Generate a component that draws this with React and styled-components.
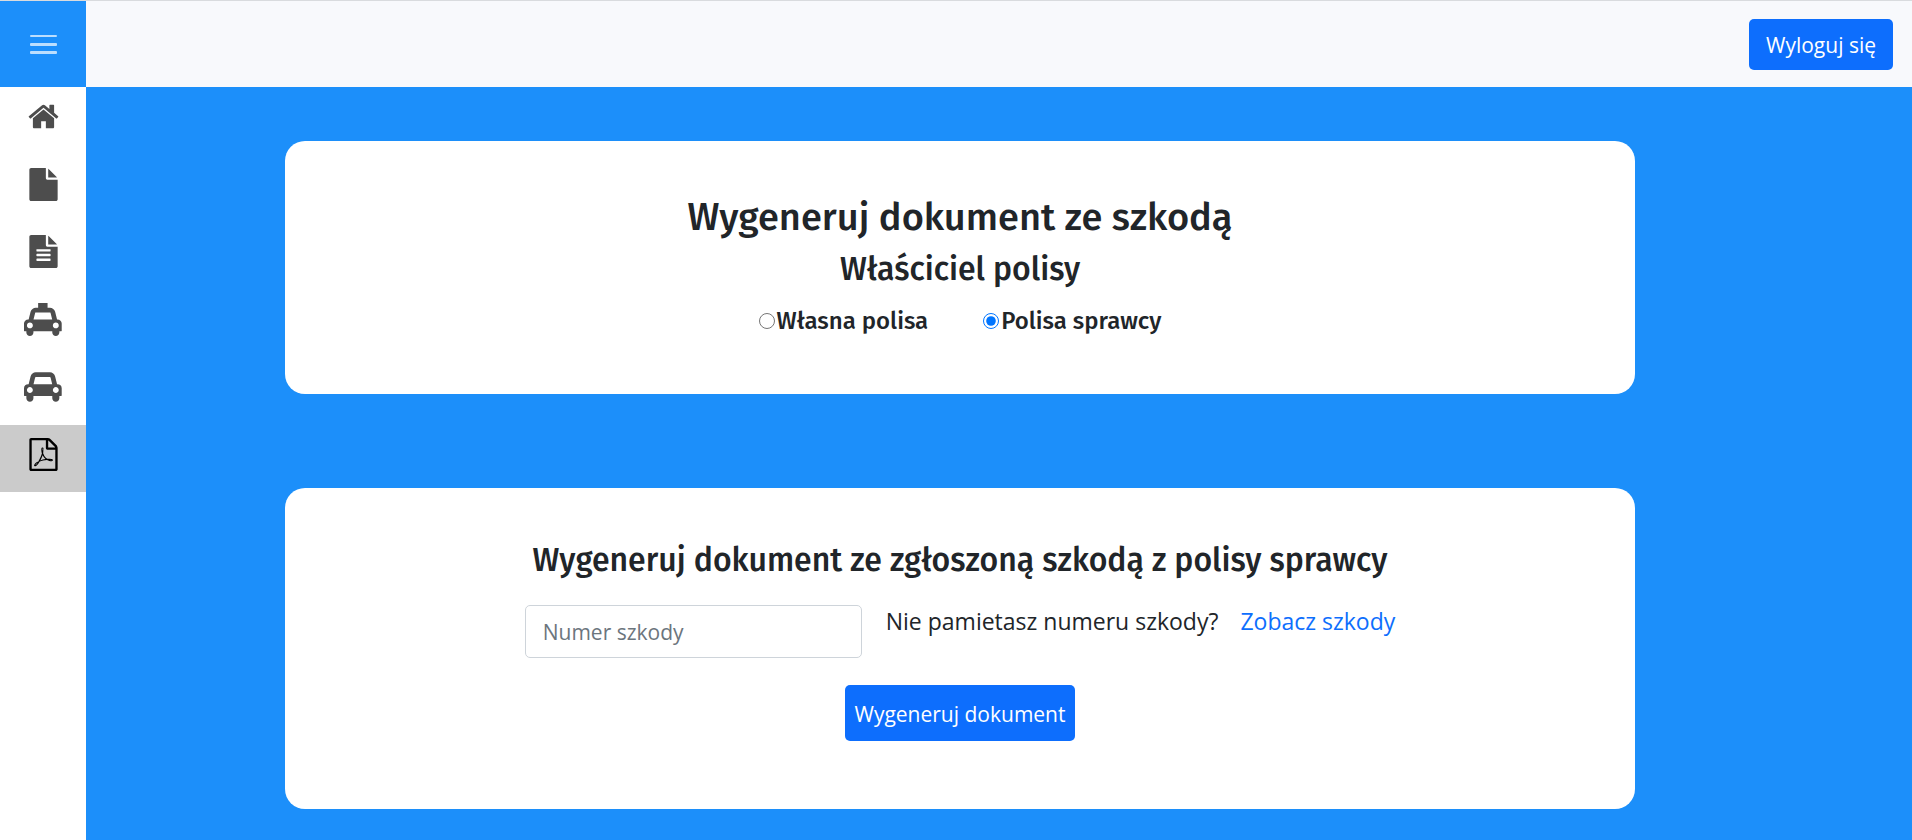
import React, { useState } from "react";
import styled, { createGlobalStyle } from "styled-components";

const GlobalStyle = createGlobalStyle`
  *, *::before, *::after { box-sizing: border-box; }
  body {
    margin: 0;
    background: #fff;
    color: #212529;
    font-family: "Segoe UI", "Open Sans", "Noto Sans", sans-serif;
    font-size: 21px;
    line-height: 32px;
  }
`;

const Page = styled.div`
  display: grid;
  grid-template-columns: 86px 1fr;
  grid-template-rows: auto 1fr;
  min-height: 100vh;
  border-top: 1px solid #d9dbde;
`;

const MenuButton = styled.button`
  display: flex;
  align-items: center;
  justify-content: center;
  border: 0;
  padding: 0;
  background: #1c8ffa;
  color: rgba(255, 255, 255, 0.7);
  cursor: pointer;
`;

const TopBar = styled.header`
  display: flex;
  justify-content: flex-end;
  align-items: center;
  padding: 18px 19px 17px;
  background: #f8f9fc;
`;

const PrimaryButton = styled.button`
  border: 0;
  border-radius: 5px;
  padding: ${(p) => (p.$tall ? "13px 10px 11px" : "10px 17px 9px")};
  background: #0d6efd;
  color: #fff;
  font: inherit;
  cursor: pointer;
`;

const SideNav = styled.nav`
  display: grid;
  grid-template-rows: repeat(6, 1fr);
  align-self: start;
  height: 405px;
`;

const SideLink = styled.a`
  display: flex;
  justify-content: center;
  padding-top: 13px;
  color: ${(p) => (p.$active ? "#000" : "#4d4d4d")};
  background: ${(p) => (p.$active ? "#cbcbcb" : "transparent")};
`;

const Glyph = styled.svg`
  display: block;
  height: 33px;
  fill: currentColor;
`;

const Main = styled.main`
  display: flex;
  flex-direction: column;
  align-items: center;
  gap: 94px;
  padding: 54px 78px 31px 0;
  background: #1c8ffa;
`;

const Card = styled.section`
  display: flex;
  flex-direction: column;
  align-items: center;
  width: 100%;
  max-width: 1350px;
  padding: ${(p) => (p.$form ? "52px 20px 68px" : "52px 20px 57px")};
  border-radius: 20px;
  background: #fff;
  text-align: center;
`;

const Title = styled.h1`
  margin: 0 0 8px;
  font-family: "Fira Sans", "Noto Sans", sans-serif;
  font-weight: 500;
  font-size: 38px;
  line-height: 48px;
`;

const Subtitle = styled.h2`
  margin: 0;
  font-family: "Fira Sans", "Noto Sans", sans-serif;
  font-weight: 500;
  font-size: 32px;
  line-height: 40px;
`;

const Choices = styled.div`
  display: flex;
  flex-wrap: wrap;
  justify-content: center;
  gap: 55px;
  margin-top: 16px;
`;

const Choice = styled.label`
  display: flex;
  align-items: center;
  gap: 2px;
  font-family: "Fira Sans", "Noto Sans", sans-serif;
  font-weight: 500;
  font-size: 24px;
`;

const Radio = styled.input`
  width: 16px;
  height: 16px;
  margin: 0;
  accent-color: #0075ff;
`;

const ClaimForm = styled.form`
  display: flex;
  flex-direction: column;
  align-items: center;
  gap: 27px;
  margin-top: 25px;
`;

const FieldRow = styled.div`
  display: flex;
  flex-wrap: wrap;
  align-items: flex-start;
  justify-content: center;
  font-size: 23px;
`;

const ClaimInput = styled.input`
  width: 337px;
  height: 53px;
  padding: 0 17px;
  border: 1px solid #ced4da;
  border-radius: 5px;
  color: #212529;
  font: inherit;
  font-size: 21px;

  &::placeholder {
    color: #6c757d;
    opacity: 1;
  }
`;

const Hint = styled.span`
  margin: 0 22px 0 24px;
`;

const ClaimsLink = styled.a`
  color: #0d6efd;
  text-decoration: none;
`;

const CAR_TOP =
  "M480 1088q0-66-47-113t-113-47-113 47-47 113 47 113 113 47 113-47 47-113zm36-320h1016l-89-357q-2-8-14-17.5t-21-9.5h-768q-9 0-21 9.5t-14 17.5zm1372 320q0-66-47-113t-113-47-113 47-47 113 47 113 113 47 113-47 47-113z";
const carPath = (leg) =>
  `${CAR_TOP}m160-96v384q0 14-9 23t-23 9h-96v${leg}q0 80-56 136t-136 56-136-56-56-136v-${leg}h-1024v${leg}q0 80-56 136t-136 56-136-56-56-136v-${leg}h-96q-14 0-23-9t-9-23v-384q0-93 65.5-158.5t158.5-65.5h28l105-419q23-94 104-157.5t179-63.5h768q98 0 179 63.5t104 157.5l105 419h28q93 0 158.5 65.5t65.5 158.5z`;

const ICONS = {
  home: {
    box: "0 0 1792 1792",
    d: "M1472 992v480q0 26-19 45t-45 19h-384v-384h-256v384h-384q-26 0-45-19t-19-45v-480q0-1 .5-3t.5-3l575-474 575 474q1 2 1 6zm223-69l-62 74q-8 9-21 11h-3q-13 0-21-7l-692-577-692 577q-12 8-24 7-13-2-21-11l-62-74q-8-10-7-23.5t11-21.5l719-599q32-26 76-26t76 26l244 204v-195q0-14 9-23t23-9h192q14 0 23 9t9 23v408l219 182q10 8 11 21.5t-7 23.5z",
  },
  file: {
    box: "0 0 1792 1792",
    d: "M1152 512v-472q22 14 36 28l408 408q14 14 28 36h-472zm-128 32q0 40 28 68t68 28h544v1056q0 40-28 68t-68 28h-1344q-40 0-68-28t-28-68v-1600q0-40 28-68t68-28h800v544z",
  },
  report: {
    box: "0 0 1792 1792",
    d: "M1596 476q14 14 28 36h-472v-472q22 14 36 28zm-476 164h544v1056q0 40-28 68t-68 28h-1344q-40 0-68-28t-28-68v-1600q0-40 28-68t68-28h800v544q0 40 28 68t68 28zm160 736v-64q0-14-9-23t-23-9h-704q-14 0-23 9t-9 23v64q0 14 9 23t23 9h704q14 0 23-9t9-23zm0-256v-64q0-14-9-23t-23-9h-704q-14 0-23 9t-9 23v64q0 14 9 23t23 9h704q14 0 23-9t9-23zm0-256v-64q0-14-9-23t-23-9h-704q-14 0-23 9t-9 23v64q0 14 9 23t23 9h704q14 0 23-9t9-23z",
  },
  taxi: {
    box: "0 -128 2048 1792",
    d: `${carPath(64)}M768-128h512v288h-512z`,
  },
  car: { box: "0 0 2048 1792", d: carPath(128) },
  pdf: {
    box: "0 0 1792 1792",
    d: "M1596 380q28 28 48 76t20 88v1152q0 40-28 68t-68 28h-1344q-40 0-68-28t-28-68v-1600q0-40 28-68t68-28h896q40 0 88 20t76 48zm-444-244v376h376q-10-29-22-41l-313-313q-12-12-41-22zm384 1528v-1024h-416q-40 0-68-28t-28-68v-416h-768v1536h1280zm-514-593q33 26 84 56 59-7 117-7 147 0 177 49 16 22 2 52 0 1-1 2l-2 2v1q-6 38-71 38-48 0-115-20t-130-53q-221 24-392 83-153 262-242 262-15 0-28-7l-24-12q-1-1-6-5-10-10-6-36 9-40 56-91.5t132-96.5q14-9 23 6 2 2 2 4 52-85 107-197 68-136 104-262-24-82-30.5-159.5t6.5-127.5q11-40 42-40h22q23 0 35 15 18 21 9 68-2 6-4 8 1 3 1 8v30q-2 123-14 192 55 164 146 238zm-576 411q52-24 137-158-51 40-87.5 84t-49.5 74zm398-920q-15 42-2 132 1-7 7-44 0-3 7-43 1-4 4-8-1-1-1-2t-1-2-1-3q-1-22-13-36 0 1-1 2v2zm-124 661q135-54 284-81-2-1-13-9.5t-16-13.5q-76-67-127-176-27 86-83 197-30 56-45 83zm646-16q-24-24-140-24 76 28 124 28 14 0 18-1 0-1-2-3z",
  },
};

const NAV = [
  { icon: "home", label: "Strona główna" },
  { icon: "file", label: "Polisa" },
  { icon: "report", label: "Polisy" },
  { icon: "taxi", label: "Zgłoś szkodę" },
  { icon: "car", label: "Szkody" },
  { icon: "pdf", label: "Dokument", active: true },
];

export default function App() {
  const [owner, setOwner] = useState("other");
  const [claim, setClaim] = useState("");

  return (
    <>
      <GlobalStyle />
      <Page>
        <MenuButton type="button" aria-label="Menu">
          <svg width="27" height="20" viewBox="0 0 27 20" fill="currentColor" aria-hidden="true">
            <rect y="1" width="27" height="2" rx="1" />
            <rect y="9" width="27" height="3" rx="1" />
            <rect y="17" width="27" height="3" rx="1" />
          </svg>
        </MenuButton>
        <TopBar>
          <PrimaryButton type="button">Wyloguj się</PrimaryButton>
        </TopBar>
        <SideNav>
          {NAV.map(({ icon, label, active }) => (
            <SideLink key={icon} href="#" aria-label={label} $active={active}>
              <Glyph viewBox={ICONS[icon].box} aria-hidden="true">
                <path d={ICONS[icon].d} />
              </Glyph>
            </SideLink>
          ))}
        </SideNav>
        <Main>
          <Card>
            <Title>Wygeneruj dokument ze szkodą</Title>
            <Subtitle>Właściciel polisy</Subtitle>
            <Choices>
              <Choice>
                <Radio
                  type="radio"
                  name="owner"
                  checked={owner === "own"}
                  onChange={() => setOwner("own")}
                />
                Własna polisa
              </Choice>
              <Choice>
                <Radio
                  type="radio"
                  name="owner"
                  checked={owner === "other"}
                  onChange={() => setOwner("other")}
                />
                Polisa sprawcy
              </Choice>
            </Choices>
          </Card>
          <Card $form>
            <Subtitle>Wygeneruj dokument ze zgłoszoną szkodą z polisy sprawcy</Subtitle>
            <ClaimForm onSubmit={(e) => e.preventDefault()}>
              <FieldRow>
                <ClaimInput
                  type="text"
                  aria-label="Numer szkody"
                  placeholder="Numer szkody"
                  value={claim}
                  onChange={(e) => setClaim(e.target.value)}
                />
                <Hint>Nie pamietasz numeru szkody?</Hint>
                <ClaimsLink href="#">Zobacz szkody</ClaimsLink>
              </FieldRow>
              <PrimaryButton type="submit" $tall>
                Wygeneruj dokument
              </PrimaryButton>
            </ClaimForm>
          </Card>
        </Main>
      </Page>
    </>
  );
}
